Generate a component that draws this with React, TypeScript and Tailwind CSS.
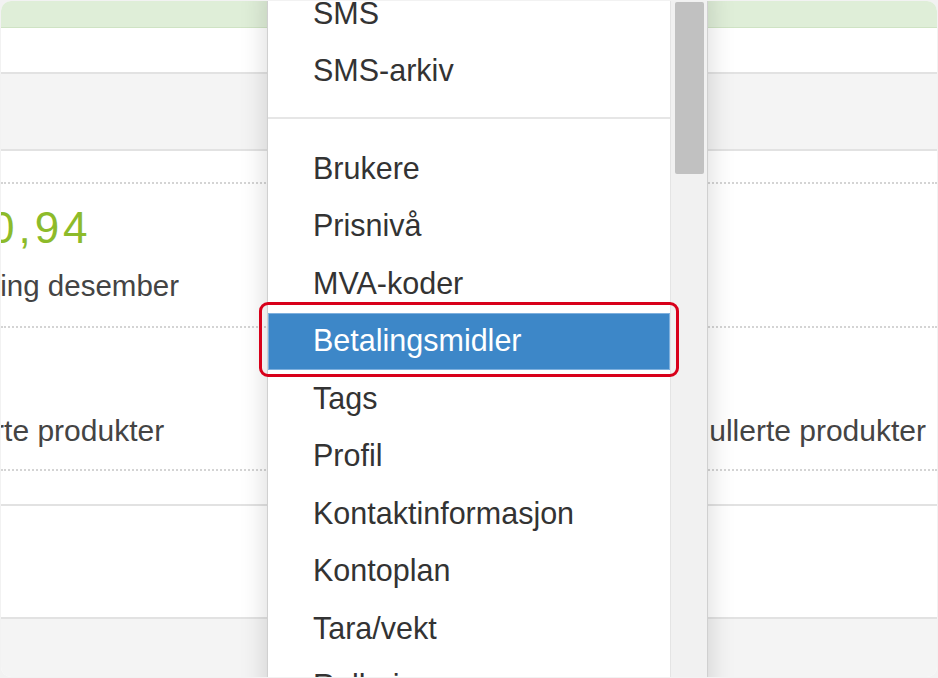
const menuTop = ["SMS", "SMS-arkiv"];
const menuItems = [
  "Brukere",
  "Prisnivå",
  "MVA-koder",
  "Betalingsmidler",
  "Tags",
  "Profil",
  "Kontaktinformasjon",
  "Kontoplan",
  "Tara/vekt",
  "Rullering",
];
const active = "Betalingsmidler";

function MenuItem({ label }: { label: string }) {
  const isActive = label === active;
  return (
    <li
      className={
        isActive
          ? "flex h-[57.5px] items-center border border-[#7fb0de] bg-[#3d87c8] pl-[44px] text-white"
          : "flex h-[57.5px] items-center pl-[45px] text-[#333]"
      }
    >
      {label}
    </li>
  );
}

export default function App() {
  return (
    <div className="h-[678px] w-[938px] bg-[#f2f2f2] p-px">
      <div className="relative h-[676px] w-[936px] overflow-hidden rounded-[10px] bg-white font-['Liberation_Sans',Arial,sans-serif]">
        {/* page behind the menu */}
        <div className="h-[27px] border-b border-[#cfe3c4] bg-[#dfeed8]" />
        <div className="h-[46px] border-b-2 border-[#e2e2e2]" />
        <div className="h-[77px] border-b-2 border-[#e2e2e2] bg-[#f4f4f4]" />
        <div className="h-[355px] border-b-2 border-[#e2e2e2]">
          <div className="h-[33px] border-b-2 border-dotted border-[#d4d4d4]" />
          <div className="h-[144px] overflow-hidden border-b-2 border-dotted border-[#d4d4d4] pt-[20px]">
            <div className="-ml-[68px] text-[44px] leading-[48px] tracking-[4px] whitespace-nowrap text-[#8dbb2a]">
              450,94
            </div>
            <div className="-ml-[104px] mt-[16px] text-[29.5px] leading-[36px] whitespace-nowrap text-[#444]">
              Omsetning desember
            </div>
          </div>
          <div className="flex h-[143px] items-start justify-between overflow-hidden border-b-2 border-dotted border-[#d4d4d4] pt-[85px] text-[30px] leading-[36px] whitespace-nowrap text-[#444]">
            <div className="-ml-[107px]">Annullerte produkter</div>
            <div className="pr-[11px]">Annullerte produkter</div>
          </div>
        </div>
        <div className="h-[113px] border-b-2 border-[#e2e2e2]" />
        <div className="h-full bg-[#f4f4f4]" />

        {/* dropdown menu */}
        <div className="absolute top-[-16px] left-[266px] flex h-[740px] w-[441px] border-x border-[#d0d0d0] bg-white shadow-[0_0_26px_rgba(0,0,0,0.16)]">
          <div className="flex-1 text-[30.5px]">
            <ul>
              {menuTop.map((m) => (
                <MenuItem key={m} label={m} />
              ))}
            </ul>
            <div className="pt-[17px] pb-[21px]">
              <div className="h-[2px] bg-[#e6e6e6]" />
            </div>
            <ul>
              {menuItems.map((m) => (
                <MenuItem key={m} label={m} />
              ))}
            </ul>
          </div>
          <div className="w-[37px] border-l border-[#e4e4e4] bg-[#f1f1f1] pt-[17px] pl-[4px]">
            <div className="h-[172px] w-[29px] rounded-[2px] bg-[#c1c1c1]" />
          </div>
        </div>

        {/* annotation */}
        <div className="absolute top-[301px] left-[258px] h-[75px] w-[420px] rounded-[9px] border-[3px] border-[#d8001a]" />
      </div>
    </div>
  );
}
